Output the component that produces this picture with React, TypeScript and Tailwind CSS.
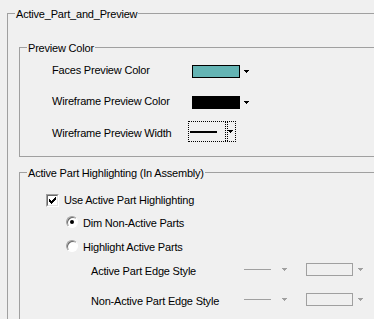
import React from "react";

const Arrow = ({ gray }: { gray?: boolean }) => (
  <svg width="5" height="3" viewBox="0 0 5 3" shapeRendering="crispEdges" className="block">
    <g fill={gray ? "#a0a0a0" : "#000000"}>
      <rect x="0" y="0" width="5" height="1" />
      <rect x="1" y="1" width="3" height="1" />
      <rect x="2" y="2" width="1" height="1" />
    </g>
  </svg>
);

const Checkbox = () => (
  <span className="flex h-[13px] w-[13px] border border-t-[#a0a0a0] border-l-[#a0a0a0] border-r-white border-b-white">
    <span className="flex flex-1 items-center justify-center border border-t-[#696969] border-l-[#696969] border-r-[#e3e3e3] border-b-[#e3e3e3] bg-white">
      <svg width="7" height="7" viewBox="0 0 7 7" shapeRendering="crispEdges" className="block">
        <path
          fill="#000"
          d="M0 2h1v3H0z M1 3h1v3H1z M2 4h1v3H2z M3 3h1v3H3z M4 2h1v3H4z M5 1h1v3H5z M6 0h1v3H6z"
        />
      </svg>
    </span>
  </span>
);

const Radio = ({ checked }: { checked?: boolean }) => (
  <span className="flex h-[12px] w-[12px] items-center justify-center rounded-full border border-t-[#a0a0a0] border-l-[#a0a0a0] border-r-white border-b-white bg-white shadow-[inset_1px_1px_0_#696969]">
    {checked && <span className="h-[4px] w-[4px] rounded-full bg-black" />}
  </span>
);

const ColorRow = ({ label, color }: { label: string; color: string }) => (
  <div className="flex items-start pl-[32px]">
    <span className="w-[140px]">{label}</span>
    <div className="mt-[1px] flex items-center">
      <div className="h-[13px] w-[48px] border border-black" style={{ backgroundColor: color }} />
      <div className="ml-[4px]">
        <Arrow />
      </div>
    </div>
  </div>
);

const EdgeRow = ({ label }: { label: string }) => (
  <div className="flex items-start pl-[71px]">
    <span className="mt-[2px] w-[153px]">{label}</span>
    <div className="flex h-[13px] items-center">
      <div className="h-[1px] w-[27px] bg-[#a0a0a0]" />
      <div className="ml-[11px]">
        <Arrow gray />
      </div>
      <div className="ml-[19px] h-[13px] w-[47px] border border-[#a0a0a0]" />
      <div className="ml-[5px]">
        <Arrow gray />
      </div>
    </div>
  </div>
);

export default function App() {
  return (
    <div className="h-[319px] w-[374px] overflow-hidden bg-[#f0f0f0] font-['Liberation_Sans',Arial,sans-serif] text-[11px] leading-[13px] tracking-[-0.2px] text-black">
      <fieldset className="ml-[7px] mt-[6px] h-[400px] w-[420px] border border-[#a0a0a0]">
        <legend className="ml-[7px] px-[1px] pt-[2px]">Active_Part_and_Preview</legend>

        <fieldset className="ml-[11px] mt-[19px] w-[400px] border border-[#a0a0a0] pb-[14px]">
          <legend className="ml-[7px] px-[1px] pt-[2px]">Preview Color</legend>
          <div className="mt-[9px]">
            <ColorRow label="Faces Preview Color" color="#64b4b4" />
          </div>
          <div className="mt-[17px]">
            <ColorRow label="Wireframe Preview Color" color="#000000" />
          </div>
          <div className="mt-[12px] flex items-start pl-[32px]">
            <span className="mt-[6px] w-[136px]">Wireframe Preview Width</span>
            <div className="flex h-[21px] w-[48px] border border-dotted border-black">
              <div className="flex w-[36px] items-center pl-[1px]">
                <div className="h-[2px] w-[27px] bg-black" />
              </div>
              <div className="flex h-full border-l border-dotted border-black pl-[1px]">
                <div className="flex h-full items-center border-l border-dotted border-black pr-[2px]">
                  <Arrow />
                </div>
              </div>
            </div>
          </div>
        </fieldset>

        <fieldset className="ml-[11px] mt-[8px] h-[300px] w-[400px] border border-[#a0a0a0]">
          <legend className="ml-[7px] px-[1px] pt-[2px]">Active Part Highlighting (In Assembly)</legend>
          <div className="mt-[14px] flex h-[13px] items-center pl-[26px]">
            <Checkbox />
            <span className="ml-[5px]">Use Active Part Highlighting</span>
          </div>
          <div className="mt-[9px] flex items-start pl-[46px]">
            <Radio checked />
            <span className="ml-[5px] pt-[1px]">Dim Non-Active Parts</span>
          </div>
          <div className="mt-[10px] flex items-start pl-[46px]">
            <Radio />
            <span className="ml-[5px] pt-[1px]">Highlight Active Parts</span>
          </div>
          <div className="mt-[9px]">
            <EdgeRow label="Active Part Edge Style" />
          </div>
          <div className="mt-[15px]">
            <EdgeRow label="Non-Active Part Edge Style" />
          </div>
        </fieldset>
      </fieldset>
    </div>
  );
}
